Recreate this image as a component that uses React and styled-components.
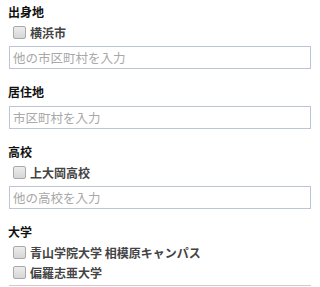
import React from 'react';
import styled, { createGlobalStyle } from 'styled-components';

const GlobalStyle = createGlobalStyle`
    body {
        margin: 0;
        background: #ffffff;
        font-family: "Noto Sans CJK JP", "Noto Sans", sans-serif;
    }
`

const FormWrap = styled.div`
    padding: 2px 9px 0 9px;
    display: flex;
    flex-direction: column;
`

const Section = styled.div`
    display: flex;
    flex-direction: column;
    margin-bottom: 13px;
    border-bottom: ${props => props.last ? '1px solid #cccccc' : 'none'};
    padding-bottom: ${props => props.last ? '3px' : '0'};
`

const Heading = styled.h3`
    margin: 0 0 0 -1px;
    font-size: 12px;
    font-weight: bold;
    line-height: 20px;
    color: #111111;
`

const CheckRow = styled.label`
    height: 20px;
    display: flex;
    align-items: center;
    gap: 4px;
    padding-left: 4px;
    font-size: 12px;
    font-weight: bold;
    color: #444444;
`

const Box = styled.span`
    width: 11px;
    height: 11px;
    border: 1px solid #a9a9a9;
    border-radius: 2px;
    background: linear-gradient(#ececec, #d6d6d6);
    flex-shrink: 0;
`

const TextInput = styled.input`
    box-sizing: border-box;
    width: 100%;
    height: 23px;
    margin-top: 4px;
    padding: 0 3px;
    border: 1px solid #bcc5d6;
    font-family: "Noto Sans CJK JP", sans-serif;
    font-size: 12.5px;
    outline: none;

    &::placeholder {
        color: #a8a8a8;
    }
`

const Check = ({ label }) => (
    <CheckRow>
        <Box />
        <span>{label}</span>
    </CheckRow>
)

const App = () => {
    return (
        <>
            <GlobalStyle />
            <FormWrap>
                <Section>
                    <Heading>出身地</Heading>
                    <Check label='横浜市' />
                    <TextInput type='text' placeholder='他の市区町村を入力' />
                </Section>
                <Section>
                    <Heading>居住地</Heading>
                    <TextInput type='text' placeholder='市区町村を入力' />
                </Section>
                <Section>
                    <Heading>高校</Heading>
                    <Check label='上大岡高校' />
                    <TextInput type='text' placeholder='他の高校を入力' />
                </Section>
                <Section last>
                    <Heading>大学</Heading>
                    <Check label='青山学院大学 相模原キャンパス' />
                    <Check label='偏羅志亜大学' />
                </Section>
            </FormWrap>
        </>
    );
};

export default App;
